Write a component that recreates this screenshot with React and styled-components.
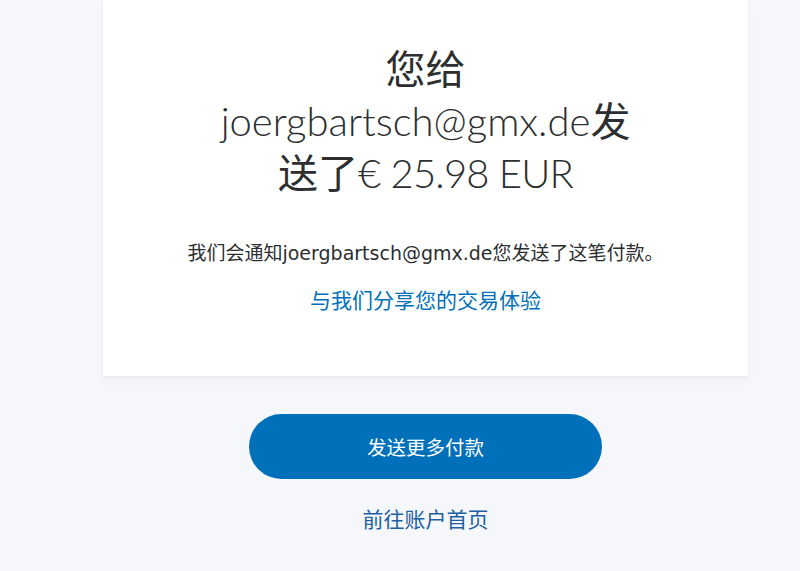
import React from 'react';
import styled, { createGlobalStyle } from 'styled-components';

const GlobalStyle = createGlobalStyle`
  html, body {
    margin: 0;
    padding: 0;
    background: #f5f7fa;
  }
  body {
    font-family: "Lato", "Noto Sans CJK SC", sans-serif;
    color: #2c2e2f;
  }
`;

const Page = styled.div`
  width: 645px;
  margin-left: 103px;
  display: flex;
  flex-direction: column;
  align-items: center;
`;

const Card = styled.div`
  width: 100%;
  box-sizing: border-box;
  background: #fff;
  box-shadow: 0 1px 3px rgba(0, 0, 0, 0.06), 0 6px 12px rgba(0, 0, 0, 0.025);
  padding: 42px 40px 63px;
  display: flex;
  flex-direction: column;
  align-items: center;
  text-align: center;
`;

const Title = styled.h1`
  margin: 0;
  font-size: 40px;
  font-weight: 300;
  line-height: 50px;
  width: 430px;
  color: #2c2e2f;
`;

const Cjk = styled.span`
  font-family: "Noto Sans CJK SC", sans-serif;
  font-weight: 400;
`;

const Amount = styled.span`
  letter-spacing: -0.8px;
`;

const Note = styled.p`
  margin: 42px 0 0;
  font-family: "DejaVu Sans", "Noto Sans CJK SC", sans-serif;
  font-size: 19px;
  line-height: 26px;
  color: #2c2e2f;
`;

const TextLink = styled.a`
  display: block;
  color: ${p => p.$dark ? '#1d5fa0' : '#0070ba'};
  font-family: "Noto Sans CJK SC", sans-serif;
  font-size: 21px;
  line-height: 28px;
  text-decoration: none;
  cursor: pointer;
`;

const Share = styled(TextLink)`
  margin-top: 19px;
`;

const PrimaryButton = styled.button`
  margin-top: 38px;
  width: 353px;
  height: 65px;
  border: none;
  border-radius: 33px;
  background: #0070ba;
  color: #fff;
  font-family: "Noto Sans CJK SC", sans-serif;
  font-size: 19.5px;
  cursor: pointer;
`;

const Home = styled(TextLink)`
  margin-top: 25px;
`;

export default function App() {
  return (
    <>
      <GlobalStyle />
      <Page>
        <Card>
          <Title>
            <Cjk>您给</Cjk> joergbartsch@gmx.de<Cjk>发送了</Cjk><Amount>€ 25.98 EUR</Amount>
          </Title>
          <Note>我们会通知joergbartsch@gmx.de您发送了这笔付款。</Note>
          <Share>与我们分享您的交易体验</Share>
        </Card>
        <PrimaryButton>发送更多付款</PrimaryButton>
        <Home $dark>前往账户首页</Home>
      </Page>
    </>
  );
}
